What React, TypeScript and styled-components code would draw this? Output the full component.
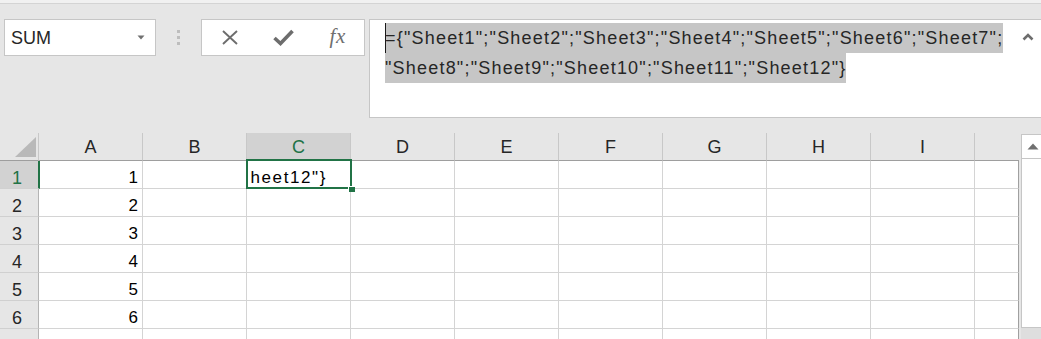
import React from "react";
import styled, { createGlobalStyle, css } from "styled-components";

const GREEN = "#217346";
const FONT = `"Liberation Sans", Arial, sans-serif`;

const GlobalStyle = createGlobalStyle`
  html, body { margin: 0; padding: 0; background: #e6e6e6; overflow: hidden; }
  * { box-sizing: border-box; }
`;

const Root = styled.div`
  width: 1041px;
  height: 339px;
  overflow: hidden;
  background: #e6e6e6;
  font-family: ${FONT};
  display: flex;
  flex-direction: column;
`;

const TopStrip = styled.div`
  height: 4px;
  background: #f1f1f1;
  border-bottom: 1px solid #d4d4d4;
  flex: none;
`;

const FormulaRow = styled.div`
  display: flex;
  align-items: flex-start;
  padding: 15px 0 0 4px;
  flex: none;
  & > * {
    flex: none;
  }
`;

const NameBox = styled.div`
  width: 152px;
  height: 37px;
  background: #fff;
  border: 1px solid #c6c6c6;
  display: flex;
  align-items: center;
  justify-content: space-between;
  padding: 0 10px 0 6px;
  font-size: 18px;
  color: #262626;
`;

const NameText = styled.span`
  padding-top: 1px;
`;

const Grip = styled.div`
  width: 45px;
  height: 37px;
  display: flex;
  align-items: center;
  justify-content: center;
  padding-right: 1px;
`;

const ButtonBox = styled.div`
  width: 164px;
  height: 37px;
  background: #fff;
  border: 1px solid #c6c6c6;
  display: flex;
  align-items: center;
  padding-left: 1px;
`;

const IconButton = styled.div`
  width: 54px;
  height: 35px;
  display: flex;
  align-items: center;
  justify-content: center;
  color: #6a6a6a;
`;

const Fx = styled.span`
  font-family: "Liberation Serif", "Times New Roman", serif;
  font-style: italic;
  font-size: 21px;
  color: #6f6f6f;
  letter-spacing: 0.5px;
  padding-left: 1px;
  padding-bottom: 2px;
`;

const FormulaBox = styled.div`
  margin-left: 4px;
  width: 676px;
  height: 99px;
  background: #fff;
  border: 1px solid #c6c6c6;
  display: flex;
`;

const FormulaText = styled.div`
  flex: 1;
  padding: 3px 0 0 15px;
  font-size: 18px;
  letter-spacing: 1.2px;
  color: #262626;
`;

const FormulaLine = styled.div`
  width: max-content;
  height: 30px;
  line-height: 30px;
  background: #c6c6c6;
  white-space: nowrap;
`;

const Caret = styled.span`
  display: inline-block;
  width: 1px;
  height: 30px;
  background: #1a1a1a;
  vertical-align: top;
  margin-right: -1px;
`;

const ExpandButton = styled.div`
  width: 32px;
  display: flex;
  justify-content: center;
  padding-top: 13px;
`;

const SheetArea = styled.div`
  display: flex;
  margin-top: 15px;
  flex: none;
`;

const Sheet = styled.div`
  width: 1019px;
  flex: none;
  display: grid;
  grid-template-columns: 39px repeat(9, 104px) 44px;
  grid-auto-rows: 28px;
`;

const Corner = styled.div`
  background: #e6e6e6;
  border-right: 1px solid #c8c8c8;
  border-bottom: 1px solid #9e9e9e;
  display: flex;
  align-items: flex-end;
  justify-content: flex-end;
  padding: 0 2px 3px 0;
`;

const ColHeader = styled.div<{ $selected?: boolean; $last?: boolean }>`
  background: ${(p) => (p.$selected ? "#d2d2d2" : "#e6e6e6")};
  color: ${(p) => (p.$selected ? GREEN : "#262626")};
  border-right: ${(p) => (p.$last ? "none" : "1px solid #c8c8c8")};
  border-bottom: 1px solid ${(p) => (p.$selected ? GREEN : "#9e9e9e")};
  font-size: 18px;
  display: flex;
  align-items: center;
  justify-content: center;
  padding-top: 2px;
`;

const RowHeader = styled.div<{ $selected?: boolean }>`
  background: ${(p) => (p.$selected ? "#d2d2d2" : "#e6e6e6")};
  color: ${(p) => (p.$selected ? GREEN : "#262626")};
  border-bottom: 1px solid #d0d0d0;
  ${(p) =>
    p.$selected
      ? css`
          border-right: 2px solid ${GREEN};
          margin-right: -1px;
          position: relative;
          z-index: 1;
        `
      : css`
          border-right: 1px solid #b4b4b4;
        `}
  font-size: 18px;
  line-height: 20px;
  display: flex;
  align-items: flex-end;
  justify-content: center;
  padding-right: 4px;
`;

const Cell = styled.div<{ $last?: boolean; $align?: "left" | "right" }>`
  background: #fff;
  border-bottom: 1px solid #d4d4d4;
  border-right: 1px solid ${(p) => (p.$last ? "#a0a0a0" : "#d4d4d4")};
  font-size: 17px;
  line-height: 20px;
  color: #000;
  display: flex;
  align-items: flex-end;
  justify-content: ${(p) => (p.$align === "right" ? "flex-end" : "flex-start")};
  padding: 0 4px 0 4px;
  white-space: nowrap;
  overflow: hidden;
`;

const ActiveCell = styled.div`
  position: relative;
  background: #fff;
  border-bottom: 1px solid #d4d4d4;
  border-right: 1px solid #d4d4d4;
  z-index: 2;
`;

const ActiveClip = styled.div`
  position: absolute;
  inset: 1px 2px 0 3px;
  overflow: hidden;
  display: flex;
  align-items: flex-end;
  justify-content: flex-end;
  padding-right: 21px;
  font-size: 17px;
  letter-spacing: 1.6px;
  line-height: 20px;
  white-space: nowrap;
  color: #000;
`;

const SelectionBorder = styled.div`
  position: absolute;
  top: -2px;
  left: -1px;
  right: -2px;
  bottom: -1px;
  border: 2px solid ${GREEN};
  pointer-events: none;
`;

const FillHandle = styled.div`
  position: absolute;
  right: -5px;
  bottom: -4px;
  width: 7px;
  height: 6px;
  background: ${GREEN};
  border-left: 1px solid #fff;
  border-top: 1px solid #fff;
`;

const VScroll = styled.div`
  margin-left: 2px;
  padding-top: 1px;
  width: 24px;
  display: flex;
  flex-direction: column;
  flex: none;
`;

const ScrollUp = styled.div`
  height: 25px;
  background: #fff;
  border: 1px solid #c6c6c6;
  display: flex;
  align-items: center;
  justify-content: center;
  padding-right: 1px;
`;

const Thumb = styled.div`
  height: 169px;
  background: #fff;
  border: 1px solid #c6c6c6;
  border-top: none;
`;

const Track = styled.div`
  flex: 1;
  background: #dedede;
`;

const columns = ["A", "B", "C", "D", "E", "F", "G", "H", "I"];
const rows = [1, 2, 3, 4, 5, 6, 7];

export default function App() {
  return (
    <Root>
      <GlobalStyle />
      <TopStrip />
      <FormulaRow>
        <NameBox>
          <NameText>SUM</NameText>
          <svg width="8" height="5" viewBox="0 0 8 5">
            <path d="M0.5 0.5 H7.5 L4 4.5 Z" fill="#707070" />
          </svg>
        </NameBox>
        <Grip>
          <svg width="3" height="15" viewBox="0 0 3 15">
            <rect x="0" y="0" width="3" height="3" fill="#bdbdbd" />
            <rect x="0" y="6" width="3" height="3" fill="#bdbdbd" />
            <rect x="0" y="12" width="3" height="3" fill="#bdbdbd" />
          </svg>
        </Grip>
        <ButtonBox>
          <IconButton>
            <svg width="18" height="15" viewBox="0 0 18 15">
              <path d="M2 1 L16 14 M16 1 L2 14" stroke="#6d6d6d" strokeWidth="1.9" fill="none" />
            </svg>
          </IconButton>
          <IconButton>
            <svg width="21" height="17" viewBox="0 0 21 17">
              <path d="M1.5 9 L7.5 14.5 L19.5 2" stroke="#6d6d6d" strokeWidth="3.6" fill="none" />
            </svg>
          </IconButton>
          <IconButton>
            <Fx>fx</Fx>
          </IconButton>
        </ButtonBox>
        <FormulaBox>
          <FormulaText>
            <FormulaLine>
              <Caret />
              {'={"Sheet1";"Sheet2";"Sheet3";"Sheet4";"Sheet5";"Sheet6";"Sheet7";'}
            </FormulaLine>
            <FormulaLine>{'"Sheet8";"Sheet9";"Sheet10";"Sheet11";"Sheet12"}'}</FormulaLine>
          </FormulaText>
          <ExpandButton>
            <svg width="12" height="8" viewBox="0 0 12 8">
              <path d="M1.5 6.5 L6 2 L10.5 6.5" stroke="#6d6d6d" strokeWidth="2.6" fill="none" />
            </svg>
          </ExpandButton>
        </FormulaBox>
      </FormulaRow>
      <SheetArea>
        <Sheet>
          <Corner>
            <svg width="21" height="20" viewBox="0 0 21 20">
              <path d="M21 0 V20 H0 Z" fill="#b9b9b9" />
            </svg>
          </Corner>
          {columns.map((c) => (
            <ColHeader key={c} $selected={c === "C"}>
              {c}
            </ColHeader>
          ))}
          <ColHeader $last />
          {rows.map((r) => (
            <React.Fragment key={r}>
              <RowHeader $selected={r === 1}>{r}</RowHeader>
              <Cell $align="right">{r}</Cell>
              <Cell />
              {r === 1 ? (
                <ActiveCell>
                  <ActiveClip>{'"Sheet12"}'}</ActiveClip>
                  <SelectionBorder />
                  <FillHandle />
                </ActiveCell>
              ) : (
                <Cell />
              )}
              <Cell />
              <Cell />
              <Cell />
              <Cell />
              <Cell />
              <Cell />
              <Cell $last />
            </React.Fragment>
          ))}
        </Sheet>
        <VScroll>
          <ScrollUp>
            <svg width="12" height="7" viewBox="0 0 12 7">
              <path d="M0.5 6.5 L6 0.5 L11.5 6.5 Z" fill="#707070" />
            </svg>
          </ScrollUp>
          <Thumb />
          <Track />
        </VScroll>
      </SheetArea>
    </Root>
  );
}
